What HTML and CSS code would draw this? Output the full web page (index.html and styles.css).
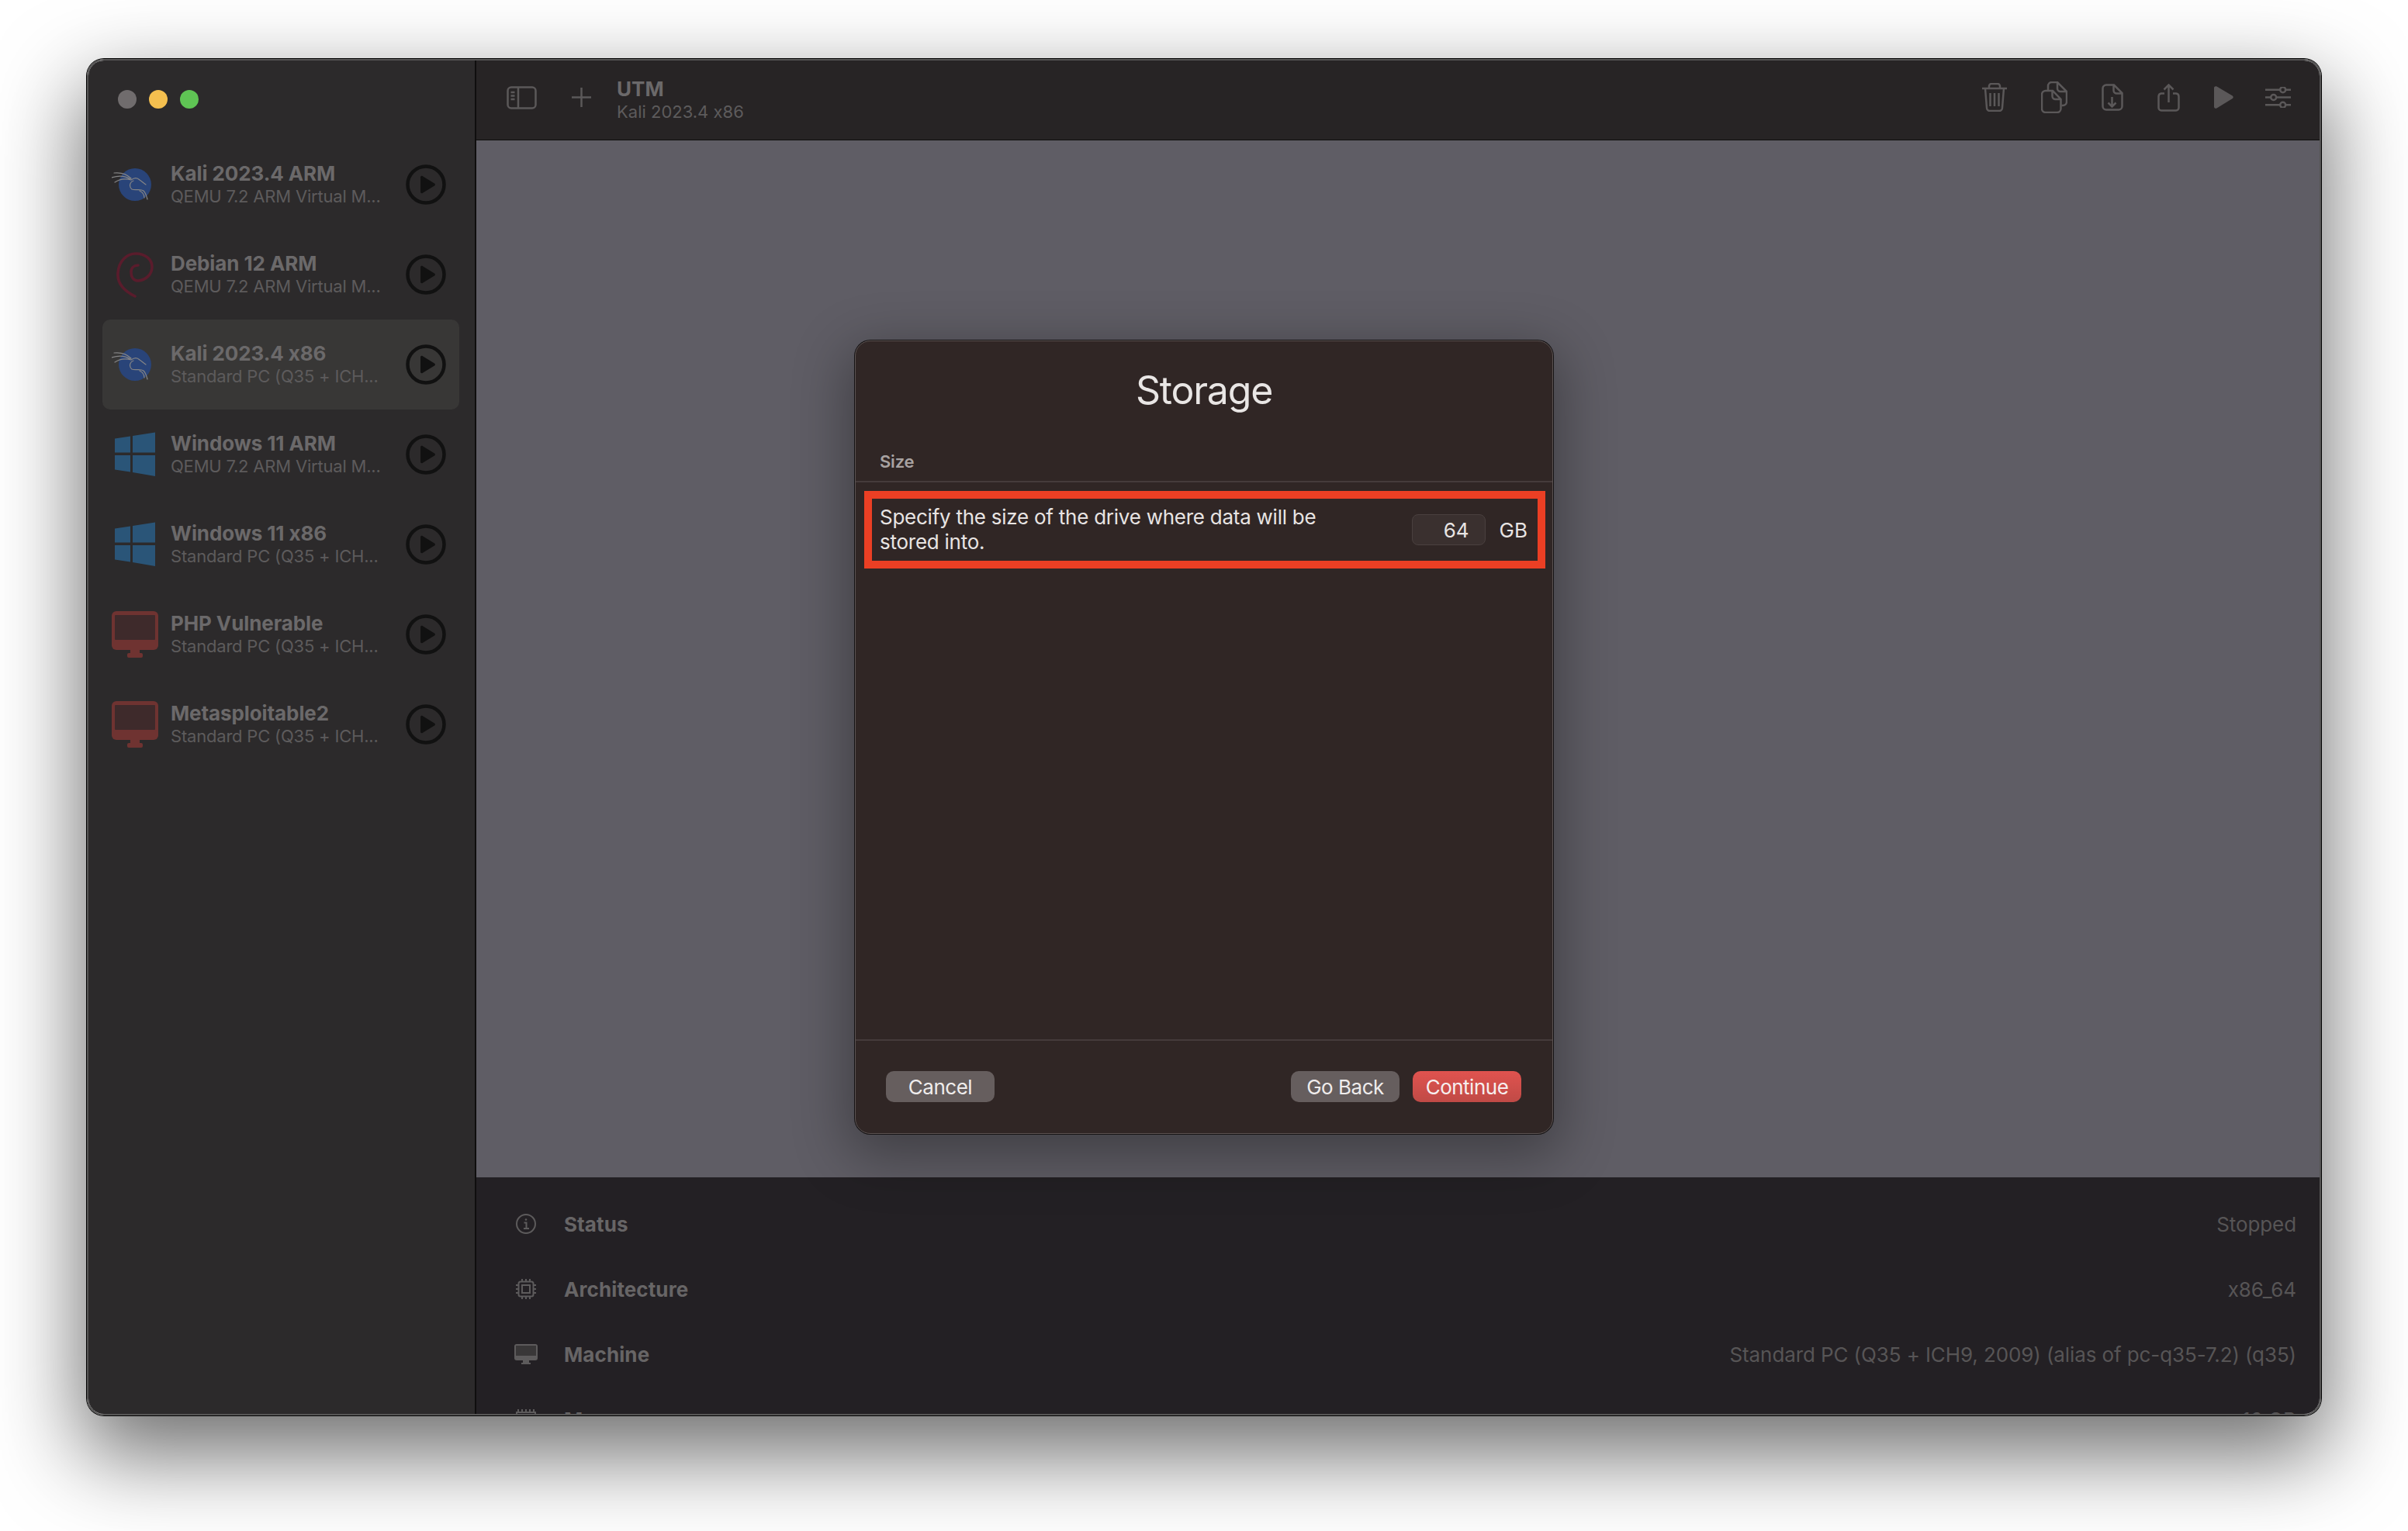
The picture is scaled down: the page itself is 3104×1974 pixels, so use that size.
FILE: index.html
```html
<!DOCTYPE html>
<html lang="en">
<head>
    <meta charset="UTF-8">
    <meta name="viewport" content="width=device-width, initial-scale=1.0">
    <title>UTM - Storage</title>
    <link rel="stylesheet" href="styles.css">
</head>
<body>
    <svg class="defs" aria-hidden="true">
        <symbol id="kali" viewBox="0 0 60 60">
            <circle cx="30" cy="30" r="21" fill="#294479"/>
            <path d="M3 15C12 14 20 17 25 22M0 21C9 18 18 19 24 23M4 27C10 23 18 22 25 24M25 24C29 21 33 21 36 24C39 26 41 28 44 30M28 25C23 27 22 33 26 36C30 38 37 35 41 38C44 41 45 45 46 49M36 38C40 40 42 44 42 47" fill="none" stroke="#858586" stroke-width="1.2" stroke-linecap="round"/>
        </symbol>
        <symbol id="debian" viewBox="0 0 60 60">
            <path d="M30 58C14 50 7 40 8 28C9 12 20 3 31 3C44 3 52 11 52 20C52 30 44 37 34 38C27 38 25 32 25 27C25 21 29 18 34 18" fill="none" stroke="#5a1c2c" stroke-width="3.6" stroke-linecap="round"/>
        </symbol>
        <symbol id="windows" viewBox="0 0 60 60">
            <path d="M4 9.5L24 6.5V27.500H4ZM27 6L56 1.500V27.500H27ZM4 31H24V52.500L4 49.500ZM27 31H56V58L27 53Z" fill="#2a5578"/>
        </symbol>
        <symbol id="monitor" viewBox="0 0 60 60">
            <rect x="0" y="0" width="60" height="50" rx="6" fill="#6f3331"/>
            <rect x="4" y="5" width="52" height="32" rx="1" fill="#3e2a2b"/>
            <rect x="24" y="49" width="12" height="6" fill="#6f3331"/>
            <rect x="20" y="54" width="20" height="6" rx="2" fill="#6f3331"/>
        </symbol>
        <symbol id="play-circle" viewBox="0 0 52 52">
            <circle cx="26" cy="26" r="23.500" fill="none" stroke="#111" stroke-width="4.500"/>
            <path d="M19 16.500C19 15 20.500 14.500 21.500 15L37 24.500C38.300 25.300 38.300 26.700 37 27.500L21.500 37C20.500 37.500 19 37 19 35.500Z" fill="#111"/>
        </symbol>
    </svg>

    <div class="window">
        <aside class="sidebar">
            <div class="lights">
                <span class="light light-grey"></span>
                <span class="light light-yellow"></span>
                <span class="light light-green"></span>
            </div>
            <div class="vm-list">
                <div class="vm">
                    <svg class="vm-icon"><use href="#kali"/></svg>
                    <div class="vm-text">
                        <div class="vm-name">Kali 2023.4 ARM</div>
                        <div class="vm-desc">QEMU 7.2 ARM Virtual M...</div>
                    </div>
                    <svg class="vm-play"><use href="#play-circle"/></svg>
                </div>
                <div class="vm">
                    <svg class="vm-icon"><use href="#debian"/></svg>
                    <div class="vm-text">
                        <div class="vm-name">Debian 12 ARM</div>
                        <div class="vm-desc">QEMU 7.2 ARM Virtual M...</div>
                    </div>
                    <svg class="vm-play"><use href="#play-circle"/></svg>
                </div>
                <div class="vm selected">
                    <svg class="vm-icon"><use href="#kali"/></svg>
                    <div class="vm-text">
                        <div class="vm-name">Kali 2023.4 x86</div>
                        <div class="vm-desc">Standard PC (Q35 + ICH...</div>
                    </div>
                    <svg class="vm-play"><use href="#play-circle"/></svg>
                </div>
                <div class="vm">
                    <svg class="vm-icon"><use href="#windows"/></svg>
                    <div class="vm-text">
                        <div class="vm-name">Windows 11 ARM</div>
                        <div class="vm-desc">QEMU 7.2 ARM Virtual M...</div>
                    </div>
                    <svg class="vm-play"><use href="#play-circle"/></svg>
                </div>
                <div class="vm">
                    <svg class="vm-icon"><use href="#windows"/></svg>
                    <div class="vm-text">
                        <div class="vm-name">Windows 11 x86</div>
                        <div class="vm-desc">Standard PC (Q35 + ICH...</div>
                    </div>
                    <svg class="vm-play"><use href="#play-circle"/></svg>
                </div>
                <div class="vm">
                    <svg class="vm-icon"><use href="#monitor"/></svg>
                    <div class="vm-text">
                        <div class="vm-name">PHP Vulnerable</div>
                        <div class="vm-desc">Standard PC (Q35 + ICH...</div>
                    </div>
                    <svg class="vm-play"><use href="#play-circle"/></svg>
                </div>
                <div class="vm">
                    <svg class="vm-icon"><use href="#monitor"/></svg>
                    <div class="vm-text">
                        <div class="vm-name">Metasploitable2</div>
                        <div class="vm-desc">Standard PC (Q35 + ICH...</div>
                    </div>
                    <svg class="vm-play"><use href="#play-circle"/></svg>
                </div>
            </div>
        </aside>

        <main class="main">
            <header class="toolbar">
                <svg class="tool tool-sidebar" width="39" height="30" viewBox="0 0 39 30">
                    <rect x="1.500" y="1.500" width="36" height="27" rx="4.500"/>
                    <path d="M15 1.500V28.500M5.500 8H10.500M5.500 12.500H10.500M5.500 17H10.500"/>
                </svg>
                <svg class="tool tool-plus" width="27" height="27" viewBox="0 0 27 27">
                    <path d="M13.500 1V26M1 13.500H26"/>
                </svg>
                <div class="toolbar-title">
                    <div class="toolbar-name">UTM</div>
                    <div class="toolbar-sub">Kali 2023.4 x86</div>
                </div>
                <div class="toolbar-actions">
                    <svg class="tool" width="32" height="37" viewBox="0 0 32 37">
                        <path d="M0 7H32M9 7V4A3 3 0 0 1 12 1H20A3 3 0 0 1 23 4V7M4 7L6 32A4 4 0 0 0 10 36H22A4 4 0 0 0 26 32L28 7M10.500 13V30M16 13V30M21.500 13V30"/>
                    </svg>
                    <svg class="tool" width="34" height="41" viewBox="0 0 34 41">
                        <path d="M9 11V6A5 5 0 0 1 14 1H21L33 13V26A5 5 0 0 1 28 31H26.500M21 1V9A4 4 0 0 0 25 13H33"/>
                        <path d="M6 12H15L25.500 23V35A5 5 0 0 1 20.500 40H6A5 5 0 0 1 1 35V17A5 5 0 0 1 6 12ZM14.500 12.500V19A4 4 0 0 0 18.500 23H25"/>
                    </svg>
                    <svg class="tool" width="28" height="35" viewBox="0 0 28 35">
                        <path d="M6 1.500H16L26.500 12V29A4.500 4.500 0 0 1 22 33.500H6A4.500 4.500 0 0 1 1.500 29V6A4.500 4.500 0 0 1 6 1.500ZM15.500 2V8.500A4 4 0 0 0 19.500 12.500H26M13.500 17V29M8.500 24.500L13.500 29.500L18.500 24.500"/>
                    </svg>
                    <svg class="tool" width="29" height="36" viewBox="0 0 29 36">
                        <path d="M9 12.500H5A4 4 0 0 0 1.500 16.500V31A3.500 3.500 0 0 0 5 34.500H24A3.500 3.500 0 0 0 27.500 31V16.500A4 4 0 0 0 24 12.500H20M14.500 24V1.500M8.500 7.500L14.500 1.500L20.500 7.500"/>
                    </svg>
                    <svg class="tool-fill" width="25" height="29" viewBox="0 0 25 29">
                        <path d="M0 2.500C0 .5 2 -.4 3.500 .5L23.800 12.500C25 13.300 25 15.200 23.800 16L3.500 28.500C2 29.400 0 28.500 0 26.500Z"/>
                    </svg>
                    <svg class="tool tool-sliders" width="33" height="27" viewBox="0 0 33 27">
                        <path d="M0 3.700H19M26.500 3.700H33M0 13.500H7M14.500 13.500H33M0 23.300H19M26.500 23.300H33"/>
                        <circle cx="22.700" cy="3.700" r="3.500"/>
                        <circle cx="10.700" cy="13.500" r="3.500"/>
                        <circle cx="22.700" cy="23.300" r="3.500"/>
                    </svg>
                </div>
            </header>

            <div class="preview"></div>

            <section class="details">
                <div class="detail">
                    <div class="detail-icon">
                        <svg class="tool-thin" width="26" height="26" viewBox="0 0 26 26">
                            <circle cx="13" cy="13" r="12"/>
                            <path d="M10.500 11.500H13.500V19M10 19H17"/>
                            <circle class="dot" cx="13" cy="7.500" r="1.300"/>
                        </svg>
                    </div>
                    <span class="detail-label">Status</span>
                    <span class="detail-value">Stopped</span>
                </div>
                <div class="detail">
                    <div class="detail-icon">
                        <svg class="tool-thin" width="26" height="26" viewBox="0 0 26 26">
                            <rect x="3.500" y="3.500" width="19" height="19" rx="2.500"/>
                            <rect x="8" y="8" width="10" height="10"/>
                            <path d="M8 0V3M13 0V3M18 0V3M8 23V26M13 23V26M18 23V26M0 8H3M0 13H3M0 18H3M23 8H26M23 13H26M23 18H26"/>
                        </svg>
                    </div>
                    <span class="detail-label">Architecture</span>
                    <span class="detail-value">x86_64</span>
                </div>
                <div class="detail">
                    <div class="detail-icon">
                        <svg width="30" height="26" viewBox="0 0 30 26">
                            <rect width="30" height="21" rx="3" fill="#5d5b5c"/>
                            <rect x="2" y="2" width="26" height="13" fill="#393738"/>
                            <path d="M11 21H19V24H21V26H9V24H11Z" fill="#5d5b5c"/>
                        </svg>
                    </div>
                    <span class="detail-label">Machine</span>
                    <span class="detail-value">Standard PC (Q35 + ICH9, 2009) (alias of pc-q35-7.2) (q35)</span>
                </div>
                <div class="detail">
                    <div class="detail-icon">
                        <svg class="tool-thin" width="26" height="26" viewBox="0 0 26 26">
                            <path d="M3 0V4M8 0V4M13 0V4M18 0V4M23 0V4"/>
                            <rect x="1" y="4" width="24" height="18"/>
                        </svg>
                    </div>
                    <span class="detail-label">Memory</span>
                    <span class="detail-value">16 GB</span>
                </div>
            </section>
        </main>

        <div class="dialog">
            <h1 class="dialog-title">Storage</h1>
            <div class="dialog-section">Size</div>
            <div class="dialog-row">
                <p class="dialog-text">Specify the size of the drive where data will be stored into.</p>
                <input class="size-input" type="text" value="64">
                <span class="size-unit">GB</span>
            </div>
            <div class="dialog-space"></div>
            <footer class="dialog-footer">
                <button type="button" class="btn">Cancel</button>
                <div class="footer-right">
                    <button type="button" class="btn">Go Back</button>
                    <button type="button" class="btn btn-primary">Continue</button>
                </div>
            </footer>
        </div>
    </div>
</body>
</html>
```

FILE: styles.css
```css
* {
    box-sizing: border-box;
}

body {
    font-family: Inter, "Liberation Sans", sans-serif;
    font-feature-settings: "calt" 0;
    background-color: #fff;
    margin: 0;
    padding: 76px 0 0 112px;
    height: 1974px;
    overflow: hidden;
}

.defs {
    display: none;
}

.window {
    position: relative;
    display: flex;
    width: 2880px;
    height: 1749px;
    border: 2px solid #565555;
    border-radius: 22px;
    overflow: hidden;
    box-shadow: 0 0 0 1px #000, 0 44px 110px 8px rgba(0, 0, 0, 0.56);
}

/* sidebar */
.sidebar {
    flex: 0 0 500px;
    min-width: 0;
    background-color: #2c2a2b;
    border-right: 2px solid #0f0e0e;
}

.lights {
    display: flex;
    gap: 16px;
    height: 102px;
    padding: 38px 0 0 38px;
}

.light {
    width: 24px;
    height: 24px;
    border-radius: 50%;
}

.light-grey {
    background-color: #706c6d;
}

.light-yellow {
    background-color: #f4bf4f;
}

.light-green {
    background-color: #5fc454;
}

.vm {
    display: flex;
    align-items: center;
    height: 116px;
    margin: 0 20px 0 18px;
    padding: 0 17px 0 12px;
    border-radius: 10px;
}

.vm.selected {
    background-color: #383736;
}

.vm-icon {
    flex: 0 0 60px;
    width: 60px;
    height: 60px;
}

.vm-text {
    flex: 1;
    min-width: 0;
    margin: 0 24px 0 16px;
}

.vm-name {
    font-size: 26px;
    line-height: 30px;
    font-weight: 700;
    letter-spacing: -0.1px;
    color: #6b696a;
    white-space: nowrap;
}

.vm-desc {
    font-size: 22px;
    line-height: 28px;
    letter-spacing: -0.2px;
    color: #5d5b5c;
    white-space: nowrap;
}

.vm-play {
    flex: 0 0 52px;
    width: 52px;
    height: 52px;
}

/* main area */
.main {
    flex: 1;
    display: flex;
    flex-direction: column;
    min-width: 0;
}

.toolbar {
    display: flex;
    align-items: center;
    flex: 0 0 103px;
    padding: 0 37px 0 39px;
    background-color: #272425;
    border-bottom: 1px solid #0f0e0e;
}

.tool,
.tool-thin {
    fill: none;
    stroke: #5b5859;
    stroke-width: 2.5;
    flex: none;
}

.tool-thin {
    stroke: #5d5b5c;
    stroke-width: 2;
}

.tool-thin .dot {
    fill: #5d5b5c;
    stroke: none;
}

.tool-fill {
    fill: #5b5859;
    flex: none;
}

.tool-sidebar,
.toolbar-actions {
    margin-bottom: 7px;
}

.tool-plus {
    margin: 0 32px 7px 44px;
}

.toolbar-title {
    flex: 1;
}

.toolbar-name {
    font-size: 26px;
    line-height: 30px;
    font-weight: 700;
    color: #6b696a;
}

.toolbar-sub {
    font-size: 22px;
    line-height: 28px;
    color: #5d5b5c;
}

.toolbar-actions {
    display: flex;
    align-items: center;
    gap: 44px;
}

.tool-sliders {
    margin-left: -3px;
}

.preview {
    flex: 1;
    background-color: #5f5d65;
}

.details {
    flex: 0 0 305px;
    padding: 18px 30px 0 44px;
    background-color: #232024;
    overflow: hidden;
}

.detail {
    display: flex;
    align-items: center;
    height: 84px;
    font-size: 26px;
}

.detail-icon {
    display: flex;
    justify-content: center;
    flex: 0 0 40px;
    margin-right: 29px;
}

.detail-label {
    flex: 1;
    font-weight: 700;
    letter-spacing: 0.1px;
    color: #676566;
}

.detail-value {
    letter-spacing: -0.1px;
    color: #575556;
}

/* sheet */
.dialog {
    position: absolute;
    left: 988px;
    top: 361px;
    display: flex;
    flex-direction: column;
    width: 900px;
    height: 1023px;
    background-color: #302625;
    border: 1px solid #5c5352;
    border-radius: 20px;
    box-shadow: 0 0 0 1px #151213, 0 20px 70px 10px rgba(0, 0, 0, 0.32);
}

.dialog-title {
    margin: 0;
    padding-top: 29px;
    height: 128px;
    font-size: 50px;
    line-height: 68px;
    font-weight: 400;
    letter-spacing: -1.2px;
    text-align: center;
    color: #e9e6e5;
}

.dialog-section {
    height: 54px;
    padding: 14px 0 0 31px;
    font-size: 22px;
    line-height: 26px;
    font-weight: 600;
    letter-spacing: -0.2px;
    color: #a8a2a1;
    border-bottom: 2px solid #453b3b;
}

.dialog-row {
    display: flex;
    align-items: center;
    height: 100px;
    margin: 11px 9px 0 11px;
    padding: 0 13px 0 10px;
    border: 10px solid #eb3f24;
    color: #e8e4e3;
    font-size: 26px;
}

.dialog-text {
    flex: 1;
    margin: 0;
    max-width: 590px;
    line-height: 32px;
    letter-spacing: -0.25px;
}

.size-input {
    width: 95px;
    height: 40px;
    margin-left: auto;
    padding: 0 20px 0 0;
    background-color: #3a302f;
    border: 1px solid #4a403f;
    border-radius: 8px;
    color: #e8e4e3;
    font: inherit;
    text-align: right;
}

.size-unit {
    margin-left: 18px;
}

.dialog-space {
    flex: 1;
}

.dialog-footer {
    display: flex;
    justify-content: space-between;
    height: 121px;
    padding: 39px 40px 0 39px;
    border-top: 2px solid #453b3b;
}

.footer-right {
    display: flex;
    gap: 17px;
}

.btn {
    width: 140px;
    height: 40px;
    padding: 0;
    background-color: #665e5e;
    border: none;
    border-radius: 10px;
    color: #efecec;
    font: inherit;
    font-size: 26px;
    letter-spacing: -0.5px;
}

.btn-primary {
    background: linear-gradient(#e0534f, #c04a46);
    color: #f6eeee;
}
```
